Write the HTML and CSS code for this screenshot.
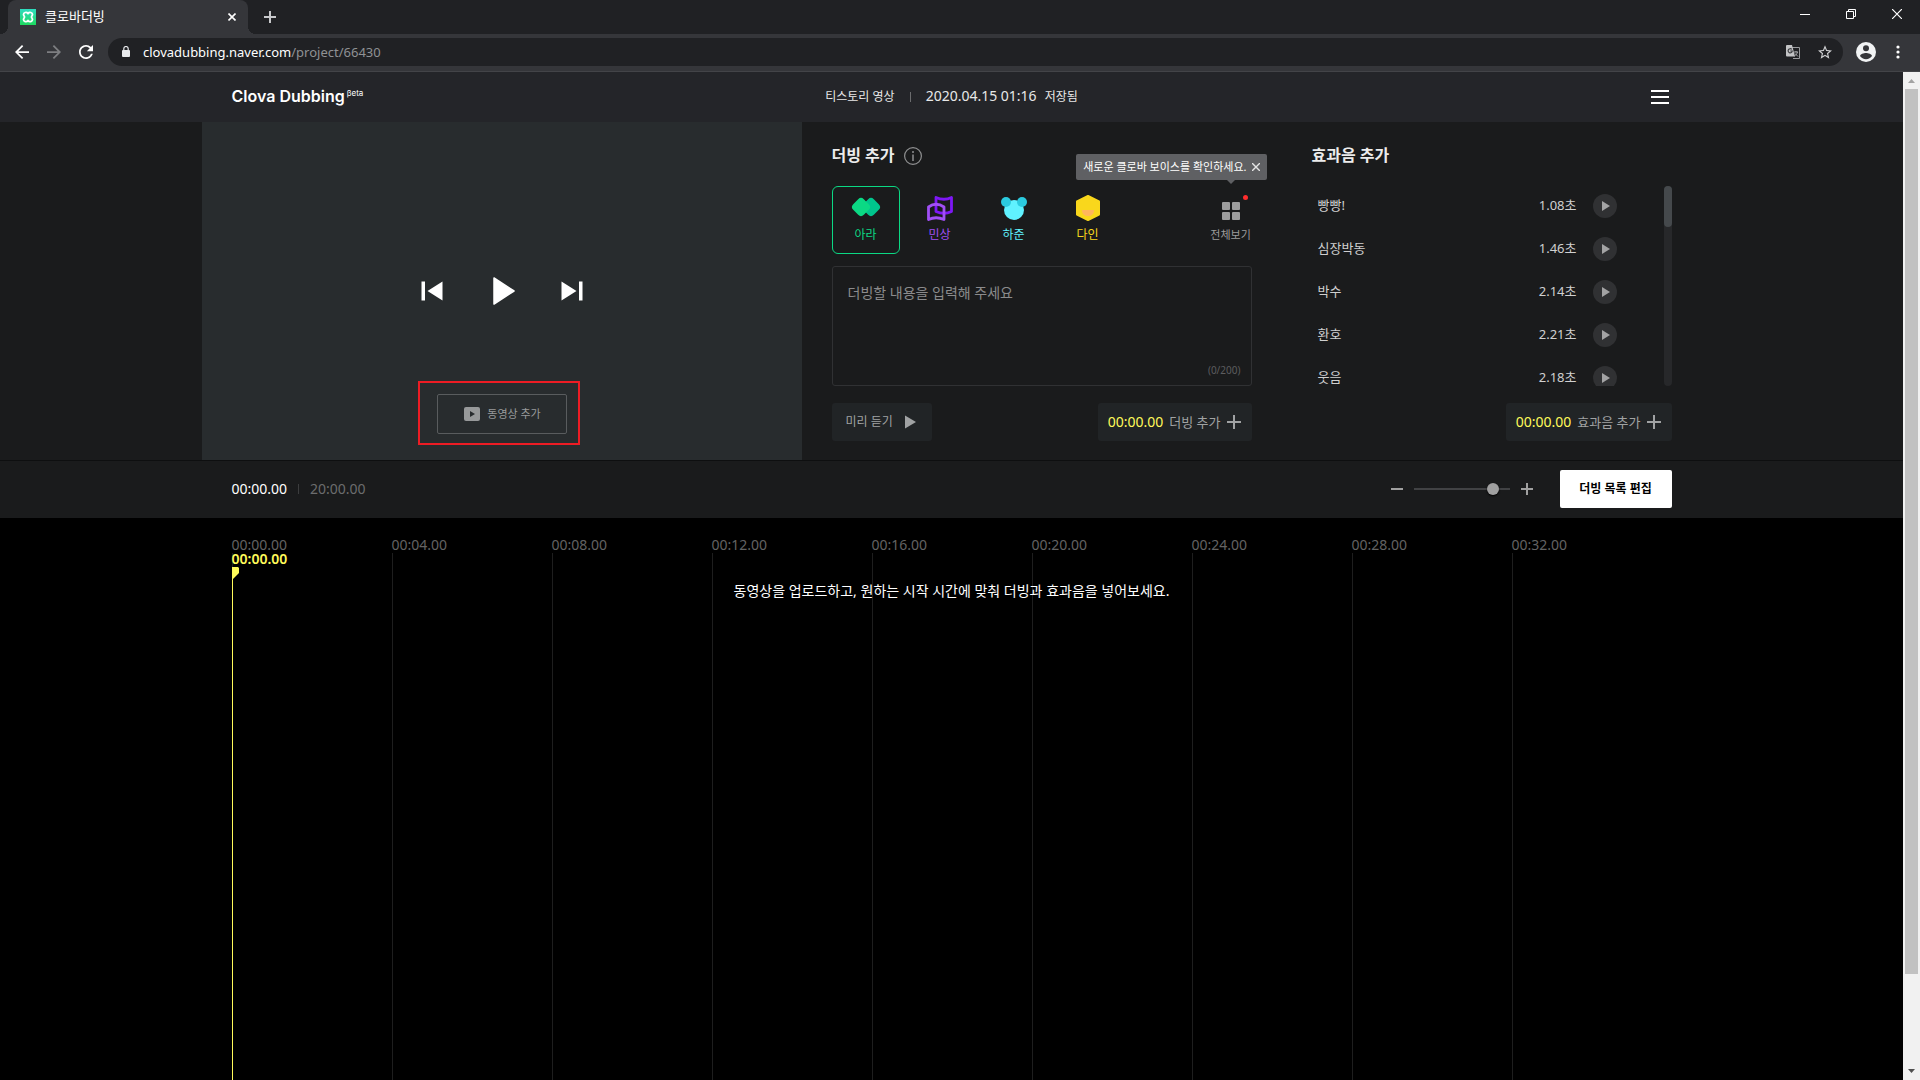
FILE: index.html
```html
<!DOCTYPE html>
<html lang="ko">
<head>
<meta charset="utf-8">
<title>클로바더빙</title>
<link rel="stylesheet" href="styles.css">
</head>
<body>
<div class="browser">
  <div class="tabstrip">
    <div class="tab">
      <svg class="favicon" width="16" height="16" viewBox="0 0 16 16"><defs><linearGradient id="fav" x1="0" y1="0" x2="0" y2="1"><stop offset="0" stop-color="#2fdcc0"/><stop offset="1" stop-color="#1ed95f"/></linearGradient></defs><rect width="16" height="16" fill="url(#fav)"/><path d="M8 4.500C6.500 2.500 3.500 3.500 3.500 5.500C3.500 6.500 4.500 7.200 4.500 8S3.500 9.500 3.500 10.500C3.500 12.500 6.500 13.500 8 11.700C9.500 13.500 12.500 12.500 12.500 10.500C12.500 9.500 11.500 8.800 11.500 8S12.500 6.500 12.500 5.500C12.500 3.500 9.500 2.500 8 4.500Z" fill="none" stroke="#fff" stroke-width="1.800"/></svg>
      <span class="tab-title">클로바더빙</span>
      <button class="bare" aria-label="탭 닫기"><svg width="8" height="8" viewBox="0 0 8 8"><path d="M0.500 0.500L7.500 7.500M7.500 0.500L0.500 7.500" stroke="#fff" stroke-width="1.600"/></svg></button>
    </div>
    <button class="bare newtab" aria-label="새 탭"><svg width="12" height="12" viewBox="0 0 12 12"><path d="M6 0V12M0 6H12" stroke="#c8c9cb" stroke-width="2"/></svg></button>
    <div class="win">
      <button class="bare" aria-label="최소화"><svg width="10" height="10" viewBox="0 0 10 10"><path d="M0 5.500H10" stroke="#fff"/></svg></button>
      <button class="bare" aria-label="이전 크기로"><svg width="10" height="10" viewBox="0 0 10 10"><path d="M0.500 2.500H7.500V9.500H0.500ZM2.500 2.500V0.500H9.500V7.500H7.500" fill="none" stroke="#fff"/></svg></button>
      <button class="bare" aria-label="닫기"><svg width="10" height="10" viewBox="0 0 10 10"><path d="M0 0L10 10M10 0L0 10" stroke="#fff" stroke-width="1.200"/></svg></button>
    </div>
  </div>
  <div class="toolbar">
    <button class="bare" aria-label="뒤로"><svg width="14" height="14" viewBox="4 4 16 16"><path fill="#fff" d="M20 11H7.830l5.590-5.590L12 4l-8 8 8 8 1.410-1.410L7.830 13H20v-2z"/></svg></button>
    <button class="bare" aria-label="앞으로"><svg width="14" height="14" viewBox="4 4 16 16"><path fill="#7d7e81" d="M4 11H16.170L10.580 5.410L12 4l8 8-8 8-1.410-1.410L16.170 13H4z"/></svg></button>
    <button class="bare" aria-label="새로고침"><svg width="14" height="14" viewBox="4 4 16 16"><path fill="#fff" d="M17.650 6.350C16.200 4.900 14.210 4 12 4c-4.420 0-7.990 3.580-7.990 8s3.570 8 7.990 8c3.730 0 6.840-2.550 7.730-6h-2.080c-.82 2.330-3.040 4-5.650 4-3.310 0-6-2.690-6-6s2.690-6 6-6c1.660 0 3.140.69 4.220 1.780L13 11h7V4l-2.350 2.350z"/></svg></button>
    <div class="address">
      <svg width="8" height="11" viewBox="0 0 8 11"><rect y="4" width="8" height="7" rx="1" fill="#e8eaed"/><path d="M1.800 4.500V2.700A2.200 2.200 0 0 1 6.200 2.700V4.500" fill="none" stroke="#e8eaed" stroke-width="1.200"/></svg>
      <span class="url">clovadubbing.naver.com<span class="path">/project/66430</span></span>
      <button class="bare" aria-label="번역"><svg width="14" height="14" viewBox="0 0 14 14"><path d="M6 2.500H13.500V13.500H7" fill="none" stroke="#9b9c9f"/><path d="M8 7H12M10 6V7M11.500 7C11 9 9.500 10.500 8.500 11M9 8.500L12 11.500" fill="none" stroke="#aaacae"/><path d="M1 0H6L9 11.500H1A1 1 0 0 1 0 10.500V1A1 1 0 0 1 1 0Z" fill="#c3c4c6"/><path d="M5.800 4.400A2.100 2.100 0 1 0 6.300 6H4.300" fill="none" stroke="#3a3b3e" stroke-width="1.100"/></svg></button>
      <button class="bare" aria-label="북마크"><svg width="14" height="14" viewBox="2 2 20 19"><path fill="#d0d1d3" d="M22 9.240l-7.190-.62L12 2 9.190 8.630 2 9.240l5.460 4.730L5.820 21 12 17.270 18.180 21l-1.630-7.030L22 9.240zM12 15.400l-3.760 2.270 1-4.280-3.320-2.880 4.380-.38L12 6.100l1.710 4.040 4.380.38-3.320 2.880 1 4.280L12 15.400z"/></svg></button>
    </div>
    <button class="bare" aria-label="프로필"><svg width="20" height="20" viewBox="0 0 20 20"><circle cx="10" cy="10" r="10" fill="#f1f3f4"/><circle cx="10" cy="6.300" r="3" fill="#35363a"/><path d="M4 14C4 12 8 10.900 10 10.900S16 12 16 14C14.700 16 12.500 17.200 10 17.200S5.300 16 4 14Z" fill="#35363a"/></svg></button>
    <button class="bare" aria-label="메뉴"><svg width="4" height="14" viewBox="0 0 4 14"><g fill="#fff"><circle cx="2" cy="2" r="1.600"/><circle cx="2" cy="7" r="1.600"/><circle cx="2" cy="12" r="1.600"/></g></svg></button>
  </div>
</div>

<div class="viewport">
<div class="page">
  <header class="header">
    <div class="wrap header-row">
      <a class="logo" href="#">Clova Dubbing<sup>βeta</sup></a>
      <div class="project"><span>티스토리 영상</span><i class="sep"></i><span class="saved"><time>2020.04.15 01:16</time>저장됨</span></div>
      <button class="bare" aria-label="전체 메뉴"><svg width="18" height="14" viewBox="0 0 18 14"><path d="M0 1H18M0 7H18M0 13H18" stroke="#fff" stroke-width="2"/></svg></button>
    </div>
  </header>

  <main class="studio">
    <section class="video">
      <div class="controls">
        <button class="bare" aria-label="처음으로"><svg width="22" height="20" viewBox="0 0 22 20"><path d="M0.500 0.500H4V19.500H0.500ZM21.500 0.500V19.500L6.500 10Z" fill="#fff"/></svg></button>
        <button class="bare" aria-label="재생"><svg width="26" height="28" viewBox="0 0 26 28"><path d="M5 1L25 14L5 27Z" fill="#fff" stroke="#fff" stroke-width="1.500" stroke-linejoin="round"/></svg></button>
        <button class="bare" aria-label="끝으로"><svg width="22" height="20" viewBox="0 0 22 20"><path d="M18 0.500H21.500V19.500H18ZM0.500 0.500V19.500L15.500 10Z" fill="#fff"/></svg></button>
      </div>
      <button class="upload"><svg width="16" height="14" viewBox="0 0 16 14"><rect width="16" height="14" rx="2" fill="#97999a"/><path d="M6 4L11 7L6 10Z" fill="#282c2e"/></svg>동영상 추가</button>
      <div class="highlight"></div>
    </section>

    <section class="panel dub">
      <div class="title-row">
        <h2>더빙 추가</h2>
        <button class="bare" aria-label="도움말"><svg width="18" height="18" viewBox="0 0 18 18"><circle cx="9" cy="9" r="8.400" fill="none" stroke="#8f9091" stroke-width="1.200"/><path d="M9 7.500V14M9 4V6" stroke="#8f9091" stroke-width="1.500"/></svg></button>
        <div class="tip">새로운 클로바 보이스를 확인하세요.<button class="bare" aria-label="닫기"><svg width="8" height="8" viewBox="0 0 8 8"><path d="M0 0L8 8M8 0L0 8" stroke="#e4e4e4" stroke-width="1.400"/></svg></button></div>
      </div>
      <div class="voices">
        <button class="voice green on"><svg width="30" height="26" viewBox="0 1 30 26"><rect x="12.500" y="5.500" width="15" height="15" rx="4" transform="rotate(45 20 13)" fill="#00c58d"/><rect x="2.500" y="5.500" width="15" height="15" rx="4" transform="rotate(45 10 13)" fill="#0bd984"/></svg>아라</button>
        <button class="voice purple"><svg width="26" height="26" viewBox="0 0 26 26"><path d="M9 2.500Q17 6 24.500 2.500V16.500Q17 20 9 16.500Z" fill="none" stroke="#7e17f5" stroke-width="2.800" stroke-linejoin="round"/><path d="M1.500 12Q9 6.500 17 12V24.500Q9 21 1.500 24.500Z" fill="none" stroke="#a14ff5" stroke-width="2.800" stroke-linejoin="round"/></svg>민상</button>
        <button class="voice cyan"><svg width="26" height="26" viewBox="0 0 26 26"><circle cx="13" cy="15" r="10" fill="#60f2ff"/><circle cx="5" cy="7" r="5" fill="#2bcbdf"/><circle cx="21" cy="7" r="5" fill="#2bcbdf"/></svg>하준</button>
        <button class="voice yellow"><svg width="26" height="26" viewBox="0 0 26 26"><path d="M13 1L24 6.500V19.500L13 25L2 19.500V6.500Z" fill="#f9d71c" stroke="#f9d71c" stroke-width="2" stroke-linejoin="round"/><path d="M7 15H19C19 19 16.500 21 13 21S7 19 7 15Z" fill="#ffb65c"/></svg>다인</button>
        <button class="voice all"><svg width="26" height="26" viewBox="0 1 26 26"><g fill="#9d9d9d"><rect x="4" y="8" width="8" height="8" rx="1"/><rect x="14" y="8" width="8" height="8" rx="1"/><rect x="4" y="18" width="8" height="8" rx="1"/><rect x="14" y="18" width="8" height="8" rx="1"/></g></svg><i class="dot"></i>전체보기</button>
      </div>
      <div class="entry">
        <textarea aria-label="더빙 내용" placeholder="더빙할 내용을 입력해 주세요"></textarea>
        <span class="count">(0/200)</span>
      </div>
      <div class="actions">
        <button class="action small">미리 듣기<svg width="11" height="14" viewBox="0 0 11 14"><path d="M0 0.500L11 7L0 13.500Z" fill="#a0a2a3"/></svg></button>
        <button class="action"><time>00:00.00</time>더빙 추가<svg width="14" height="14" viewBox="0 0 14 14"><path d="M7 0V14M0 7H14" stroke="#a0a2a3" stroke-width="2"/></svg></button>
      </div>
    </section>

    <section class="panel fx">
      <div class="title-row"><h2>효과음 추가</h2></div>
      <div class="fx-box">
        <ul class="fx-list">
          <li><span>빵빵!</span><span>1.08초</span><button class="play" aria-label="빵빵! 재생"><svg width="8" height="10" viewBox="0 0 8 10"><path d="M0 0L8 5L0 10Z" fill="#a3a3a4"/></svg></button></li>
          <li><span>심장박동</span><span>1.46초</span><button class="play" aria-label="심장박동 재생"><svg width="8" height="10" viewBox="0 0 8 10"><path d="M0 0L8 5L0 10Z" fill="#a3a3a4"/></svg></button></li>
          <li><span>박수</span><span>2.14초</span><button class="play" aria-label="박수 재생"><svg width="8" height="10" viewBox="0 0 8 10"><path d="M0 0L8 5L0 10Z" fill="#a3a3a4"/></svg></button></li>
          <li><span>환호</span><span>2.21초</span><button class="play" aria-label="환호 재생"><svg width="8" height="10" viewBox="0 0 8 10"><path d="M0 0L8 5L0 10Z" fill="#a3a3a4"/></svg></button></li>
          <li><span>웃음</span><span>2.18초</span><button class="play" aria-label="웃음 재생"><svg width="8" height="10" viewBox="0 0 8 10"><path d="M0 0L8 5L0 10Z" fill="#a3a3a4"/></svg></button></li>
        </ul>
        <div class="fx-scroll"><i></i></div>
      </div>
      <div class="actions end">
        <button class="action"><time>00:00.00</time>효과음 추가<svg width="14" height="14" viewBox="0 0 14 14"><path d="M7 0V14M0 7H14" stroke="#a0a2a3" stroke-width="2"/></svg></button>
      </div>
    </section>
  </main>

  <div class="transport">
    <div class="wrap transport-row">
      <time class="now">00:00.00</time><i class="sep dim"></i><time class="total">20:00.00</time>
      <div class="zoom">
        <button class="bare" aria-label="축소"><svg width="12" height="12" viewBox="0 0 12 12"><path d="M0 6H12" stroke="#a0a0a0" stroke-width="2"/></svg></button>
        <input type="range" aria-label="타임라인 배율" min="0" max="100" value="88">
        <button class="bare" aria-label="확대"><svg width="12" height="12" viewBox="0 0 12 12"><path d="M6 0V12M0 6H12" stroke="#a0a0a0" stroke-width="2"/></svg></button>
      </div>
      <button class="edit">더빙 목록 편집</button>
    </div>
  </div>

  <section class="timeline">
    <div class="wrap tracks">
      <div class="tick"><time>00:00.00</time></div>
      <div class="tick"><time>00:04.00</time></div>
      <div class="tick"><time>00:08.00</time></div>
      <div class="tick"><time>00:12.00</time></div>
      <div class="tick"><time>00:16.00</time></div>
      <div class="tick"><time>00:20.00</time></div>
      <div class="tick"><time>00:24.00</time></div>
      <div class="tick"><time>00:28.00</time></div>
      <div class="tick"><time>00:32.00</time></div>
      <div class="playhead"><time>00:00.00</time><svg width="7" height="12" viewBox="0 0 7 12"><path d="M0 0H6L7 1V6L1 12H0Z" fill="#fffa5a"/></svg></div>
      <p class="guide">동영상을 업로드하고, 원하는 시작 시간에 맞춰 더빙과 효과음을 넣어보세요.</p>
    </div>
  </section>
</div>
<div class="scrollbar">
  <svg width="17" height="17" viewBox="0 0 17 17"><path d="M5 11L8.500 7L12 11Z" fill="#a3a3a3"/></svg>
  <i></i>
  <svg width="17" height="17" viewBox="0 0 17 17"><path d="M5 6L8.500 10L12 6Z" fill="#505050"/></svg>
</div>
</div>
</body>
</html>
```
FILE: styles.css
```css
* { box-sizing: border-box; }
body {
  margin: 0;
  height: 100vh;
  display: flex;
  flex-direction: column;
  overflow: hidden;
  background: #000;
  color: #fff;
  font: 14px/20px "Noto Sans", "Noto Sans CJK KR", sans-serif;
}
button, textarea { font: inherit; }
button { cursor: pointer; }
svg { display: block; flex: none; }
h2, p, ul { margin: 0; padding: 0; }
.bare { padding: 0; border: 0; background: none; flex: none; }

/* Browser frame */
.tabstrip { display: flex; align-items: center; height: 34px; padding: 0 18px 0 8px; background: #202124; }
.tab {
  position: relative;
  display: flex;
  align-items: center;
  gap: 9px;
  width: 240px;
  height: 34px;
  padding: 0 12px;
  border-radius: 8px 8px 0 0;
  background: #35363a;
}
.tab::before, .tab::after { content: ""; position: absolute; bottom: 0; width: 8px; height: 8px; }
.tab::before { left: -8px; background: radial-gradient(circle at 0 0, transparent 8px, #35363a 8px); }
.tab::after { right: -8px; background: radial-gradient(circle at 100% 0, transparent 8px, #35363a 8px); }
.tab-title { flex: 1; font-size: 13px; line-height: 18px; padding-bottom: 2px; }
.newtab { margin-left: 16px; }
.win { display: flex; gap: 36px; margin-left: auto; padding-bottom: 6px; }
.toolbar {
  display: flex;
  align-items: center;
  gap: 18px;
  height: 38px;
  padding: 0 20px 2px 15px;
  border-bottom: 1px solid #434448;
  background: #35363a;
}
.address {
  flex: 1;
  display: flex;
  align-items: center;
  gap: 18px;
  height: 28px;
  margin: 0 -5px 0 -3px;
  padding: 0 11px 0 14px;
  border-radius: 14px;
  background: #202124;
}
.toolbar > :last-child { margin-left: 2px; }
.url { flex: 1; margin-left: -5px; font-size: 13px; }
.path { color: #8f9194; }
.viewport { flex: 1; display: flex; min-height: 0; }
.page { flex: 1; display: flex; flex-direction: column; min-width: 0; background: #1a1b1c; }
.scrollbar { display: flex; flex-direction: column; width: 17px; background: #f1f1f1; }
.scrollbar i { flex: 10 0 0; margin: 0 2px; background: #c1c1c1; }
.scrollbar::after { content: ""; flex: 1 0 0; order: 1; }
.scrollbar svg:last-child { order: 2; }

/* Header */
.wrap { width: 100%; max-width: 1440px; margin: 0 auto; }
.header { background: #242529; }
.header-row { display: grid; grid-template-columns: 1fr auto 1fr; align-items: center; height: 50px; }
.header-row > button { justify-self: end; padding-right: 3px; }
.logo { color: #fff; text-decoration: none; font: 600 16px/20px Inter, sans-serif; padding-bottom: 2px; }
.logo sup { margin-left: 2px; font-size: 8px; font-weight: 400; line-height: 1px; }
.project { display: flex; align-items: center; padding-bottom: 1px; font-size: 12px; color: #e8e8e8; }
.project time { margin-right: 8px; font-size: 14px; }
.sep { width: 1px; height: 10px; margin: 0 15px; background: #6b6c6e; }

/* Studio panels */
.studio {
  display: grid;
  grid-template-columns: 40fr 32fr 28fr;
  width: 100%;
  max-width: 1500px;
  margin: 0 auto;
}
.video {
  position: relative;
  display: flex;
  flex-direction: column;
  align-items: center;
  justify-content: flex-end;
  gap: 89px;
  padding-bottom: 26px;
  background: #282c2e;
}
.controls { display: flex; align-items: center; gap: 46px; }
.upload {
  display: flex;
  align-items: center;
  justify-content: center;
  gap: 7px;
  width: 130px;
  height: 40px;
  padding: 0 0 0 2px;
  border: 1px solid #595c5e;
  border-radius: 2px;
  background: none;
  color: #999b9c;
  font-size: 11px;
}
.highlight {
  position: absolute;
  bottom: 15px;
  left: 216px;
  width: 162px;
  height: 64px;
  border: 2px solid #ed1c24;
  pointer-events: none;
}
.panel { padding: 20px 30px 19px; }
.title-row { position: relative; display: flex; align-items: center; gap: 9px; height: 28px; }
h2 { font-size: 16px; font-weight: 700; line-height: 26px; padding-bottom: 2px; color: #ececec; }
.tip {
  position: absolute;
  top: 12px;
  right: -15px;
  display: flex;
  align-items: center;
  gap: 5px;
  height: 26px;
  padding: 0 7px;
  border-radius: 2px;
  background: #5f6063;
  font-size: 11px;
  white-space: nowrap;
}
.tip::after {
  content: "";
  position: absolute;
  top: 100%;
  right: 32px;
  border: 4px solid transparent;
  border-top-color: #5f6063;
  border-bottom: 0;
}
.voices { display: flex; gap: 6px; margin-top: 16px; }
.voice {
  position: relative;
  display: flex;
  flex-direction: column;
  align-items: center;
  gap: 4px;
  width: 68px;
  height: 68px;
  padding: 8px 0 0;
  border: 1px solid transparent;
  border-radius: 6px;
  background: none;
  font-size: 12px;
}
.on { border-color: #0bd984; }
.green { color: #0bd984; }
.purple { color: #a14ff5; }
.cyan { color: #60f2ff; }
.yellow { color: #f9d71c; }
.all { width: 42px; margin-left: auto; color: #9d9d9d; font-size: 11px; white-space: nowrap; }
.dot { position: absolute; top: 8px; right: 3px; width: 5px; height: 5px; border-radius: 50%; background: #ff2d2d; }
.entry { position: relative; height: 120px; margin-top: 12px; }
textarea {
  display: block;
  width: 100%;
  height: 100%;
  padding: 16px 15px;
  border: 1px solid #303133;
  border-radius: 3px;
  background: none;
  resize: none;
  color: #fff;
}
textarea::placeholder { color: #8b8b8c; }
.count { position: absolute; right: 11px; bottom: 6px; font-size: 10px; color: #5c5d5e; }
.actions { display: flex; justify-content: space-between; margin-top: 17px; }
.end { justify-content: flex-end; }
.action {
  display: flex;
  align-items: center;
  gap: 6px;
  height: 38px;
  padding: 0 11px 0 10px;
  border: 0;
  border-radius: 3px;
  background: #212426;
  color: #a0a2a3;
  font-size: 13px;
}
.small { gap: 12px; padding: 0 16px 0 14px; font-size: 12px; }
.action time { font-size: 14px; color: #fffa5a; }
.fx-box { display: flex; height: 200px; margin-top: 16px; overflow: hidden; }
.fx-list { flex: 1; display: flex; flex-direction: column; gap: 19px; padding: 8px 47px 0 6px; list-style: none; }
.fx-list li { display: flex; align-items: center; gap: 16px; height: 24px; flex: none; font-size: 13px; color: #d0d0d0; }
.fx-list li span { padding-bottom: 2px; }
.fx-list li span:first-child { flex: 1; }
.play {
  display: flex;
  align-items: center;
  justify-content: center;
  width: 24px;
  height: 24px;
  padding: 0 0 0 2px;
  border: 0;
  border-radius: 50%;
  background: #303133;
}
.fx-scroll { width: 8px; border-radius: 4px; background: #27282a; }
.fx-scroll i { display: block; height: 41px; border-radius: 4px; background: #45494c; }

/* Transport bar */
.transport { border-top: 1px solid #0e0f10; background: #1a1b1c; }
.transport-row { display: flex; align-items: center; height: 57px; padding-bottom: 2px; }
.dim { margin: 0 11px; background: #3c3d3e; }
.total { color: #6c6d6e; }
.zoom { display: flex; align-items: center; gap: 11px; margin-left: auto; margin-right: 27px; }
input[type="range"] {
  appearance: none;
  width: 96px;
  height: 12px;
  margin: 0;
  background: linear-gradient(#414244, #414244) center / 100% 2px no-repeat;
}
input[type="range"]::-webkit-slider-thumb {
  appearance: none;
  width: 12px;
  height: 12px;
  border-radius: 50%;
  background: #a0a0a0;
  box-shadow: 0 1px 2px #000;
}
.edit {
  width: 112px;
  height: 38px;
  padding: 0;
  border: 0;
  border-radius: 2px;
  background: #fff;
  color: #000;
  font-size: 12px;
  font-weight: 700;
}

/* Timeline */
.timeline { flex: 1; display: flex; background: #000; }
.tracks { position: relative; display: flex; padding-top: 20px; }
.tick { flex: 1; display: flex; flex-direction: column; color: #636363; }
.tick time { line-height: 14px; }
.tick::after { content: ""; flex: 1; margin-top: 1px; border-left: 1px solid #1e1e1e; }
.playhead {
  position: absolute;
  top: 34px;
  bottom: 0;
  left: 0;
  display: flex;
  flex-direction: column;
  color: #fffa5a;
  font-weight: 600;
  line-height: 14px;
}
.playhead svg { margin-top: 1px; }
.playhead::after { content: ""; flex: 1; border-left: 1px solid #fffa5a; }
.guide { position: absolute; top: 63px; left: 0; width: 100%; text-align: center; }
```
